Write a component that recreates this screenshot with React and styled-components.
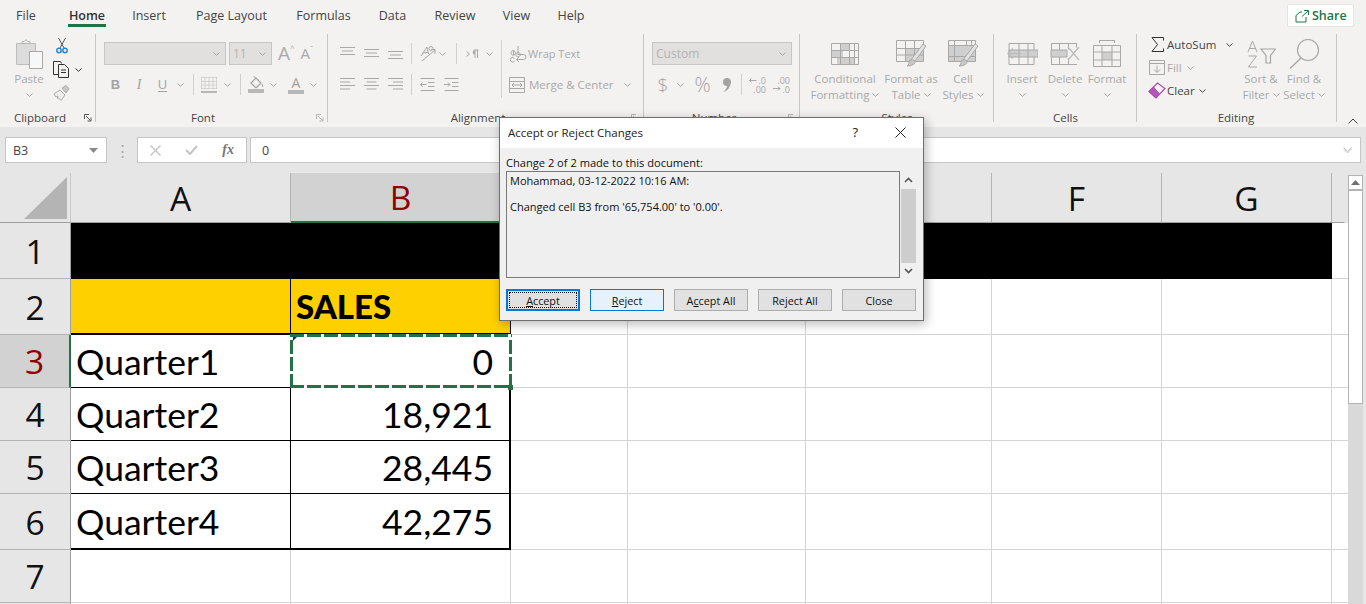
import React from 'react';
import styled, { createGlobalStyle } from 'styled-components';

const UI_FONT = `"Open Sans", "Noto Sans", sans-serif`;
const CELL_FONT = `Lato, "Liberation Sans", sans-serif`;
const MUTED = '#a9a9a9';
const GREEN = '#217346';

const Chev = ({ c = '#a3a3a3' }) => (
  <svg width="7" height="4" viewBox="0 0 7 4"><path d="M.5.5 3.5 3.3 6.5.5" fill="none" stroke={c} /></svg>
);

const PasteIcon = () => (
  <svg width="28" height="31" viewBox="0 0 28 31">
    <path d="M1.5 5.5h19v21h-19z" fill="#dcdcdc" stroke="#bdbdbd" />
    <path d="M7 5.500V3.500h2.500l1.500-2 1.500 2H15v2z" fill="#f3f2f1" stroke="#b5b5b5" />
    <path d="M14.500 13.500h13v17h-13z" fill="#f7f7f7" stroke="#a8a8a8" />
  </svg>
);
const CutIcon = () => (
  <svg width="12" height="17" viewBox="0 0 12 17">
    <path d="M2.500 1 8 11M9.500 1 4 11" fill="none" stroke="#555" />
    <circle cx="3" cy="13.500" r="2.200" fill="none" stroke="#2b88d8" strokeWidth="1.500" />
    <circle cx="9" cy="13.500" r="2.200" fill="none" stroke="#2b88d8" strokeWidth="1.500" />
  </svg>
);
const CopyIcon = () => (
  <svg width="17" height="17" viewBox="0 0 17 17">
    <path d="M6.500 13.500H.5V.5h7l1 2" fill="none" stroke="#333" />
    <path d="M5.500 3.500h6l4 4v9h-10z" fill="#f3f2f1" stroke="#333" />
    <path d="M8 9h5M8 11.500h5" stroke="#333" />
  </svg>
);
const BrushIcon = () => (
  <svg width="17" height="16" viewBox="0 0 17 16">
    <path d="M9 3l4-2.500 3 3L13 8z" fill="#c8c8c8" stroke="#a8a8a8" />
    <path d="M1 9l6-4 5 5-4 5.500L5.500 13l-1 .5L5 11l-2 1z" fill="#eee" stroke="#a8a8a8" />
  </svg>
);
const BordersIcon = () => (
  <svg width="16" height="16" viewBox="0 0 16 16">
    <path d="M.5.500h15M.5 4.500h15M.5 8h15M.5 11.500h15M.5.500v12M4 .500v12M8 .500v12M12 .500v12M15.500.500v12" stroke="#bbb" strokeDasharray="1 1" fill="none" />
    <path d="M0 15h16" stroke="#a3a3a3" strokeWidth="1.500" />
  </svg>
);
const FillIcon = () => (
  <svg width="17" height="17" viewBox="0 0 17 17">
    <path d="M3 7l5-5 5 5-4.500 4.500a1 1 0 0 1-1 0z" fill="none" stroke="#a3a3a3" strokeWidth="1.200" />
    <path d="M8 2 5.500 .5M14 8l1 3" stroke="#a3a3a3" fill="none" />
    <path d="M0 13h16v4H0z" fill="#b8b8b8" />
  </svg>
);
const AlignLines = ({ rows, align = 'left' }) => (
  <svg width="15" height="15" viewBox="0 0 15 15">
    {rows.map((w, i) => {
      const x = align === 'center' ? (15 - w) / 2 : align === 'right' ? 15 - w : 0;
      return <path key={i} d={`M${x} ${i * 3.500 + 1.500}h${w}`} stroke="#a8a8a8" />;
    })}
  </svg>
);
const VAlignIcon = ({ y }) => (
  <svg width="15" height="15" viewBox="0 0 15 15">
    {[15, 11, 15].map((w, i) => (
      <path key={i} d={`M${(15 - w) / 2} ${y + i * 3.500 + .500}h${w}`} stroke="#a8a8a8" />
    ))}
  </svg>
);
const OrientIcon = () => (
  <svg width="17" height="17" viewBox="0 0 17 17">
    <path d="M2 11 8 2l1.500 7M4 8l5-.5" stroke="#a8a8a8" fill="none" />
    <circle cx="12" cy="3.500" r="2" fill="none" stroke="#a8a8a8" />
    <path d="M3 16 16 5M12 4.500h4V9" stroke="#a8a8a8" fill="none" />
  </svg>
);
const RtlIcon = () => (
  <svg width="13" height="10" viewBox="0 0 13 10">
    <path d="M.5 2.500 3.500 5 .5 7.500" stroke="#a8a8a8" fill="none" />
    <path d="M8 1h4.500M9 1v8M11.500 1v8" stroke="#a8a8a8" fill="none" />
    <path d="M9 1a2 2 0 0 0 0 4.500z" fill="#a8a8a8" />
  </svg>
);
const IndentIcon = ({ flip }) => (
  <svg width="15" height="15" viewBox="0 0 15 15">
    <g stroke="#a8a8a8" fill="none">
      <path d="M.5 1.500h14M.5 13.500h14M8 5.500h6.500M8 9.500h6.500" />
      <path d={flip ? 'M0 7.500h6M4 5.500l2 2-2 2' : 'M.5 7.500h6M2.500 5.500l-2 2 2 2'} />
    </g>
  </svg>
);
const WrapIcon = () => (
  <svg width="17" height="18" viewBox="0 0 17 18">
    <path d="M1 8a2.200 2.200 0 1 0 0-.1M3.500 5v5M8 1v9M8 7.500a2.200 2.200 0 1 0 .1 0" stroke="#a8a8a8" fill="none" />
    <path d="M4.500 13.500a2.300 2.300 0 1 0 0 2.500" stroke="#a8a8a8" fill="none" />
    <path d="M7 14.500h6.500a2.500 2.500 0 0 0 0-5H8M9 12 6.500 14.500 9 17" stroke="#a8a8a8" fill="none" />
  </svg>
);
const MergeIcon = () => (
  <svg width="16" height="16" viewBox="0 0 16 16">
    <path d="M.5.500h15v15H.5zM.5 4.500h15M.5 11.500h15" stroke="#a8a8a8" fill="none" />
    <path d="M3 8h10M5 6 3 8l2 2M11 6l2 2-2 2" stroke="#a8a8a8" fill="none" />
  </svg>
);
const DecIcon = ({ a, b, flip }) => (
  <DecBox>
    <DecArrow width="8" height="17" viewBox="0 0 8 17">
      <path d={flip ? 'M0 12.500h7M5 10.500l2 2-2 2' : 'M.5 4.500h7M2.500 2.500l-2 2 2 2'} stroke="#a8a8a8" fill="none" />
    </DecArrow>
    <DecLine>{a}<br />{b}</DecLine>
  </DecBox>
);
const CommaIcon = () => (
  <svg width="9" height="14" viewBox="0 0 9 14">
    <circle cx="5" cy="4" r="4" fill="#a3a3a3" />
    <path d="M8.500 4.500C8.500 9 6 12.500 1.500 14 4.500 11 5.500 8.500 5.500 6z" fill="#a3a3a3" />
  </svg>
);
const CondIcon = () => (
  <svg width="28" height="22" viewBox="0 0 28 22">
    <path d="M.5.500h27v21H.5z" fill="#f3f2f1" stroke="#a8a8a8" />
    <path d="M9 1h9v7H9zM1 7h11v7H1zM6 14h17v7H6z" fill="#cfcfcf" />
    <path d="M.5 7.500h27M.5 14.500h27M9.500.500v21M18.500.500v21M23.500.500v21" stroke="#a8a8a8" fill="none" />
  </svg>
);
const TableBrushIcon = ({ cell }) => (
  <svg width="31" height="27" viewBox="0 0 31 27">
    <path d="M.5.500h27v21H.5z" fill="#f3f2f1" stroke="#a8a8a8" />
    {cell ? <path d="M1 6h26v15H1z" fill="#cfcfcf" /> : <path d="M10 9h17v12H10z" fill="#cfcfcf" />}
    <path d={cell ? 'M.5 5.500h27M.5 16.500h27M6.500.500v21M18.500.500v5M23.500.500v5' : 'M.5 8.500h27M.5 15h27M9.500.500v21M18.500.500v21'} stroke="#a8a8a8" fill="none" />
    <path d="M15 20l12-16 3 2-11 15z" fill="#e2e2e2" stroke="#a8a8a8" />
    <path d="M13 21c3-2 6-1 6 1s-3 4-8 4c2-1 2-3 2-5z" fill="#c8c8c8" stroke="#a8a8a8" />
  </svg>
);
const InsertIcon = () => (
  <svg width="32" height="22" viewBox="0 0 32 22">
    <path d="M3 .500h25v21H3z" fill="#f3f2f1" stroke="#a8a8a8" />
    <path d="M3 7h29v7H3z" fill="#cfcfcf" stroke="#a8a8a8" />
    <path d="M13 .500v21M22 .500v21" stroke="#a8a8a8" />
    <path d="M15 10.500H2M7 5.500l-5 5 5 5" stroke="#bbb" strokeWidth="1.500" fill="none" />
  </svg>
);
const DeleteIcon = () => (
  <svg width="30" height="22" viewBox="0 0 30 22">
    <path d="M1 .500h26M1 21.500h26M1.500.500v21M9.500.500v21M18.500.500v6M18.500 15v6M26.500.500v4" stroke="#a8a8a8" fill="none" />
    <path d="M1 7h16v7H1z" fill="#cfcfcf" stroke="#a8a8a8" />
    <path d="M18 4l11 13M29 4 18 17" stroke="#bbb" strokeWidth="1.300" fill="none" />
  </svg>
);
const FormatIcon = () => (
  <svg width="28" height="27" viewBox="0 0 28 27">
    <path d="M6 .500h16M6.500 0v3M21.500 0v3" stroke="#a8a8a8" fill="none" />
    <path d="M.5 5.500h27v21H.5z" fill="#f3f2f1" stroke="#a8a8a8" />
    <path d="M9 12h10v8H9z" fill="#cfcfcf" />
    <path d="M.5 12h27M.5 20h27M9 5.500v21M19 5.500v21" stroke="#a8a8a8" fill="none" />
  </svg>
);
const SigmaIcon = () => (
  <svg width="13" height="15" viewBox="0 0 13 15">
    <path d="M12.500 3.500V.5H1l5.500 7L1 14.500h11.500v-3" fill="none" stroke="#333" />
  </svg>
);
const FillDownIcon = () => (
  <svg width="16" height="15" viewBox="0 0 16 15">
    <path d="M.5.500h15v14H.5zM.5 3.500h15" stroke="#a8a8a8" fill="none" />
    <path d="M8 5.500V12M5 9.500 8 12.500 11 9.500" stroke="#a8a8a8" fill="none" />
  </svg>
);
const EraserIcon = () => (
  <svg width="18" height="17" viewBox="0 0 18 17">
    <path d="M1 9.500 9.500 1 17 6.500 8 16z" fill="#f3f2f1" stroke="#a94bb0" strokeWidth="1.200" />
    <path d="M1 9.500 5.500 5 11 11.500 8 16z" fill="#b455b9" stroke="#a94bb0" />
  </svg>
);
const SortIcon = () => (
  <svg width="29" height="28" viewBox="0 0 29 28">
    <path d="M1 12 5.500 1 10 12M2.500 8.500h6M1.500 16h8L1.500 27h8.500" stroke="#a8a8a8" fill="none" />
    <path d="M14 9h14.500l-5 6.500V23h-4.500v-7.500z" fill="#f3f2f1" stroke="#a3a3a3" strokeWidth="1.200" />
  </svg>
);
const FindIcon = () => (
  <svg width="31" height="30" viewBox="0 0 31 30">
    <circle cx="19" cy="11" r="10.500" fill="none" stroke="#a8a8a8" strokeWidth="1.200" />
    <path d="M12 19 1 29.500" stroke="#a8a8a8" strokeWidth="1.500" />
  </svg>
);
const ShareIcon = () => (
  <svg width="14" height="14" viewBox="0 0 14 14">
    <path d="M9 1.500h4.500V6M13 2 7 7.500" fill="none" stroke={GREEN} />
    <path d="M1 6.500 5 3h2M11 8v5H1V6.500" fill="none" stroke={GREEN} />
  </svg>
);
const LauncherIcon = ({ c }) => (
  <svg width="8" height="8" viewBox="0 0 8 8">
    <path d="M.5 5V.5H5M2 2l4.500 4.500M3.500 7h3.500V3.500" fill="none" stroke={c} />
  </svg>
);

const TABS = [
  ['File', 52], ['Home', 70, true], ['Insert', 54], ['Page Layout', 111], ['Formulas', 73],
  ['Data', 65], ['Review', 60], ['View', 63], ['Help', 46],
];
const COLUMNS = [['A', 220], ['B', 220, true], ['', 117], ['', 178], ['', 186], ['F', 170], ['G', 170]];
const ROW_HEIGHTS = [56, 56, 53, 53, 53, 56, 53, 2];
const SALES = [['Quarter1', '0'], ['Quarter2', '18,921'], ['Quarter3', '28,445'], ['Quarter4', '42,275']];

const App = () => (
  <Page>
    <GlobalStyle />
    <TabBar>
      {TABS.map(([name, w, active]) => <Tab key={name} $w={w} $active={active}>{name}</Tab>)}
      <ShareButton><ShareIcon />Share</ShareButton>
    </TabBar>

    <Ribbon>
      <Group $w={96}>
        <Body $pl={7}>
          <BigCol $w={44}>
            <BigIcon><PasteIcon /></BigIcon>
            <BigText>Paste</BigText>
            <ChevLine><Chev /></ChevLine>
          </BigCol>
          <ClipTools>
            <CutIcon />
            <CopyRow><CopyIcon /><Chev c="#333" /></CopyRow>
            <BrushIcon />
          </ClipTools>
        </Body>
        <GroupLabel $pr={16}>Clipboard</GroupLabel>
        <Launcher $left={84}><LauncherIcon c="#555" /></Launcher>
      </Group>

      <Group $w={232}>
        <Stack>
          <Row>
            <Combo $ml={8} $w={122}><Chev /></Combo>
            <Combo $ml={3} $w={43}><ComboText>11</ComboText><Chev /></Combo>
            <Tool $ml={6}><GrowA>A</GrowA><Caret>^</Caret></Tool>
            <Tool $ml={6}><ShrinkA>A</ShrinkA><Caret>ˇ</Caret></Tool>
          </Row>
          <Row>
            <Tool $ml={15} $w={9}><BoldB>B</BoldB></Tool>
            <Tool $ml={15} $w={8}><ItalicI>I</ItalicI></Tool>
            <Tool $ml={15} $w={9}><UnderU>U</UnderU></Tool>
            <Tool $ml={10}><Chev /></Tool>
            <Sep $ml={9} />
            <Tool $ml={7}><BordersIcon /></Tool>
            <Tool $ml={7}><Chev /></Tool>
            <Sep $ml={9} />
            <Tool $ml={7}><FillIcon /></Tool>
            <Tool $ml={5}><Chev /></Tool>
            <Tool $ml={11} $w={16}><ColorA>A</ColorA></Tool>
            <Tool $ml={6}><Chev /></Tool>
          </Row>
        </Stack>
        <GroupLabel $pr={18}>Font</GroupLabel>
        <Launcher $left={220}><LauncherIcon c="#b5b5b5" /></Launcher>
      </Group>

      <Group $w={316}>
        <Body>
          <Stack $w={173}>
            <Row>
              <Tool $ml={12}><VAlignIcon y={1} /></Tool>
              <Tool $ml={9}><VAlignIcon y={3} /></Tool>
              <Tool $ml={9}><VAlignIcon y={5} /></Tool>
              <Sep $ml={8} />
              <Tool $ml={7}><OrientIcon /></Tool>
              <Tool $ml={3}><Chev /></Tool>
              <Sep $ml={10} />
              <Tool $ml={9}><RtlIcon /></Tool>
              <Tool $ml={7}><Chev /></Tool>
            </Row>
            <Row>
              <Tool $ml={12}><AlignLines rows={[15, 10, 15, 10]} /></Tool>
              <Tool $ml={9}><AlignLines rows={[15, 10, 15, 10]} align="center" /></Tool>
              <Tool $ml={9}><AlignLines rows={[15, 10, 15, 10]} align="right" /></Tool>
              <Sep $ml={8} />
              <Tool $ml={8}><IndentIcon /></Tool>
              <Tool $ml={9}><IndentIcon flip /></Tool>
            </Row>
          </Stack>
          <WrapBlock>
            <Row>
              <Tool $ml={8}><WrapIcon /></Tool>
              <ToolText $ml={1} $fs={11}>Wrap Text</ToolText>
            </Row>
            <Row>
              <Tool $ml={7}><MergeIcon /></Tool>
              <ToolText $ml={4}>Merge &amp; Center</ToolText>
              <Tool $ml={10}><Chev /></Tool>
            </Row>
          </WrapBlock>
        </Body>
        <GroupLabel $pr={16}>Alignment</GroupLabel>
        <Launcher $left={303}><LauncherIcon c="#b5b5b5" /></Launcher>
      </Group>

      <Group $w={156}>
        <Stack>
          <Row>
            <Combo $ml={8} $w={140}><ComboText>Custom</ComboText><Chev /></Combo>
          </Row>
          <Row>
            <Tool $ml={14} $w={10}><Dollar>$</Dollar></Tool>
            <Tool $ml={9}><Chev /></Tool>
            <Tool $ml={9} $w={19}><Percent>%</Percent></Tool>
            <Tool $ml={10} $w={9}><CommaIcon /></Tool>
            <Sep $ml={10} />
            <Tool $ml={7}><DecIcon a=".0" b=".00" /></Tool>
            <Tool $ml={7}><DecIcon a=".00" b=".0" flip /></Tool>
          </Row>
        </Stack>
        <GroupLabel $pr={16}>Number</GroupLabel>
        <Launcher $left={144}><LauncherIcon c="#b5b5b5" /></Launcher>
      </Group>

      <Group $w={194}>
        <Body $pl={6}>
          <BigCol $w={78}><BigIcon><CondIcon /></BigIcon><BigText>Conditional</BigText><BigText>Formatting <Chev /></BigText></BigCol>
          <BigCol $w={54}><BigIcon><TableBrushIcon /></BigIcon><BigText>Format as</BigText><BigText>Table <Chev /></BigText></BigCol>
          <BigCol $w={50}><BigIcon><TableBrushIcon cell /></BigIcon><BigText>Cell</BigText><BigText>Styles <Chev /></BigText></BigCol>
        </Body>
        <GroupLabel>Styles</GroupLabel>
      </Group>

      <Group $w={143}>
        <Body $pl={7}>
          <BigCol $w={42}><BigIcon><InsertIcon /></BigIcon><BigText>Insert</BigText><ChevLine><Chev /></ChevLine></BigCol>
          <BigCol $w={44}><BigIcon><DeleteIcon /></BigIcon><BigText>Delete</BigText><ChevLine><Chev /></ChevLine></BigCol>
          <BigCol $w={40}><BigIcon><FormatIcon /></BigIcon><BigText>Format</BigText><ChevLine><Chev /></ChevLine></BigCol>
        </Body>
        <GroupLabel>Cells</GroupLabel>
      </Group>

      <Group $w={200}>
        <Body>
          <EditList>
            <EditRow><Tool $ml={11} $w={18}><SigmaIcon /></Tool><ToolText $dark $ml={1}>AutoSum</ToolText><Tool $ml={10}><Chev c="#444" /></Tool></EditRow>
            <EditRow><Tool $ml={10} $w={19}><FillDownIcon /></Tool><ToolText $ml={1}>Fill</ToolText><Tool $ml={5}><Chev /></Tool></EditRow>
            <EditRow><Tool $ml={10} $w={19}><EraserIcon /></Tool><ToolText $dark $ml={1}>Clear</ToolText><Tool $ml={4}><Chev c="#444" /></Tool></EditRow>
          </EditList>
          <BigCol $w={42}><BigIcon><SortIcon /></BigIcon><BigText>Sort &amp;</BigText><BigText>Filter <Chev /></BigText></BigCol>
          <BigCol $w={44}><BigIcon><FindIcon /></BigIcon><BigText>Find &amp;</BigText><BigText>Select <Chev /></BigText></BigCol>
        </Body>
        <GroupLabel $pr={2}>Editing</GroupLabel>
      </Group>

      <CollapseArea>
        <svg width="10" height="6" viewBox="0 0 10 6"><path d="M.5 5.500 5 1l4.500 4.500" fill="none" stroke="#444" /></svg>
      </CollapseArea>
    </Ribbon>

    <FormulaBar>
      <NameBox>B3<svg width="9" height="5" viewBox="0 0 9 5"><path d="M0 0h9L4.500 5z" fill="#8a8a8a" /></svg></NameBox>
      <BarDots>⋮</BarDots>
      <FxBox>
        <svg width="11" height="11" viewBox="0 0 11 11"><path d="M.5.500l10 10M10.500.500l-10 10" stroke="#c4c4c4" strokeWidth="1.400" /></svg>
        <svg width="13" height="10" viewBox="0 0 13 10"><path d="M1 5l4 4 7-8" fill="none" stroke="#c4c4c4" strokeWidth="2" /></svg>
        <FxText>fx</FxText>
      </FxBox>
      <FormulaInput>
        0
        <svg width="9" height="6" viewBox="0 0 9 6"><path d="M.5.500 4.500 4.500 8.500.500M.5 2 4.500 6 8.500 2" fill="none" stroke="#c4c4c4" /></svg>
      </FormulaInput>
    </FormulaBar>

    <SheetArea>
      <Grid>
        <Corner>
          <svg width="43" height="42" viewBox="0 0 43 42"><path d="M43 0v42H0z" fill="#b4b4b4" /></svg>
        </Corner>
        {COLUMNS.map(([label, , selected], i) => (
          <ColHead key={i} $selected={selected}>{label}</ColHead>
        ))}
        <ColHead $last />

        {ROW_HEIGHTS.map((_, r) => {
          const rowNo = r + 1;
          const sales = SALES[r - 2];
          return (
            <React.Fragment key={r}>
              <RowHead $selected={rowNo === 3} $green={rowNo === 3}>{rowNo < 8 ? rowNo : ''}</RowHead>
              {rowNo === 1 && <MergedBlack />}
              {rowNo === 2 && (
                <>
                  <YellowCell />
                  <YellowCell $bold>SALES</YellowCell>
                </>
              )}
              {sales && (
                <>
                  <Cell $data $last={rowNo === 6}>{sales[0]}</Cell>
                  {rowNo === 3 ? (
                    <ActiveCell>{sales[1]}</ActiveCell>
                  ) : (
                    <Cell $data $right $last={rowNo === 6} $edge>{sales[1]}</Cell>
                  )}
                </>
              )}
              {rowNo > 6 && (
                <>
                  <Cell />
                  <Cell />
                </>
              )}
              {rowNo !== 1 && [0, 1, 2, 3, 4].map(c => <Cell key={c} />)}
              <Cell $end />
            </React.Fragment>
          );
        })}
      </Grid>
      <ScrollBar>
        <ScrollUp><svg width="9" height="5" viewBox="0 0 9 5"><path d="M4.500 0 9 5H0z" fill="#707070" /></svg></ScrollUp>
        <ScrollThumb />
      </ScrollBar>
    </SheetArea>

    <Dialog>
      <DialogTitle>
        <span>Accept or Reject Changes</span>
        <DialogHelp>?</DialogHelp>
        <svg width="11" height="11" viewBox="0 0 11 11"><path d="M.5.500l10 10M10.500.500l-10 10" stroke="#222" /></svg>
      </DialogTitle>
      <DialogBody>
        <DialogLine>Change 2 of 2 made to this document:</DialogLine>
        <ChangeBox>
          <ChangeText>
            <div>Mohammad, 03-12-2022 10:16 AM:</div>
            <div>&nbsp;</div>
            <div>Changed cell B3 from '65,754.00' to '0.00'.</div>
          </ChangeText>
          <BoxScroll>
            <svg width="9" height="6" viewBox="0 0 9 6"><path d="M1 5l3.500-3.500L8 5" fill="none" stroke="#555" strokeWidth="1.600" /></svg>
            <BoxThumb />
            <svg width="9" height="6" viewBox="0 0 9 6"><path d="M1 1l3.500 3.500L8 1" fill="none" stroke="#555" strokeWidth="1.600" /></svg>
          </BoxScroll>
        </ChangeBox>
        <DialogButtons>
          <DlgButton $focus><FocusRing><u>A</u>ccept</FocusRing></DlgButton>
          <DlgButton $hover><u>R</u>eject</DlgButton>
          <DlgButton>A<u>c</u>cept All</DlgButton>
          <DlgButton>Re<u>j</u>ect All</DlgButton>
          <DlgButton>Close</DlgButton>
        </DialogButtons>
      </DialogBody>
    </Dialog>
  </Page>
);

export default App;

const GlobalStyle = createGlobalStyle`
  html, body { margin: 0; padding: 0; background: #fff; overflow: hidden; }
  * { box-sizing: border-box; }
`;

const Page = styled.div`
  position: relative;
  width: 1366px;
  height: 604px;
  overflow: hidden;
  background: #f3f2f1;
  font-family: ${UI_FONT};
  font-size: 12px;
  color: #444;
`;

const TabBar = styled.div`
  display: flex;
  height: 33px;
`;

const Tab = styled.div`
  position: relative;
  width: ${p => p.$w}px;
  height: 30px;
  line-height: 31px;
  text-align: center;
  font-size: 12.5px;
  color: ${p => (p.$active ? '#333' : '#444')};
  ${p => p.$active && `
    font-weight: 600;
    &::after {
      content: '';
      position: absolute;
      left: 16px;
      right: 16px;
      bottom: 3px;
      height: 3px;
      background: ${GREEN};
    }
  `}
`;

const ShareButton = styled.div`
  display: flex;
  align-items: center;
  gap: 3px;
  width: 67px;
  height: 23px;
  margin: 4px 0 0 693px;
  padding-left: 7px;
  background: #fff;
  border: 1px solid #e6e4e2;
  border-radius: 2px;
  color: ${GREEN};
  font-size: 12.5px;
  font-weight: 600;
`;

const Ribbon = styled.div`
  display: flex;
  height: 94px;
`;

const Group = styled.div`
  position: relative;
  display: flex;
  flex-direction: column;
  width: ${p => p.$w}px;
  flex: none;
  &::after {
    content: '';
    position: absolute;
    right: 0;
    top: 1px;
    bottom: 5px;
    width: 1px;
    background: #c8c6c4;
  }
`;

const Body = styled.div`
  display: flex;
  flex: 1;
  padding-left: ${p => p.$pl || 0}px;
  min-height: 0;
`;

const Stack = styled.div`
  display: flex;
  flex-direction: column;
  flex: ${p => (p.$w ? 'none' : 1)};
  width: ${p => (p.$w ? `${p.$w}px` : 'auto')};
  gap: 8px;
  padding-top: 9px;
`;

const GroupLabel = styled.div`
  height: 18px;
  padding-right: ${p => p.$pr || 0}px;
  line-height: 17px;
  text-align: center;
  font-size: 11.500px;
  color: #444;
`;

const Launcher = styled.span`
  position: absolute;
  left: ${p => p.$left}px;
  top: 81px;
  line-height: 0;
`;

const BigCol = styled.div`
  display: flex;
  flex-direction: column;
  align-items: center;
  flex: none;
  width: ${p => p.$w}px;
  padding-top: 3px;
`;

const BigIcon = styled.div`
  display: flex;
  align-items: center;
  justify-content: center;
  height: 35px;
`;

const BigText = styled.div`
  height: 16px;
  line-height: 16px;
  white-space: nowrap;
  font-size: 11.500px;
  color: ${MUTED};
  svg { vertical-align: 2px; }
`;

const ChevLine = styled.div`
  display: flex;
  align-items: center;
  height: 16px;
`;

const ClipTools = styled.div`
  display: flex;
  flex-direction: column;
  justify-content: flex-start;
  align-items: flex-start;
  gap: 7px;
  padding: 4px 0 0 4px;
  & > svg:first-child { margin-left: 1px; }
  & > svg:last-child { margin-left: -2px; }
`;

const CopyRow = styled.div`
  display: flex;
  align-items: center;
  gap: 5px;
  svg:first-child { margin-left: -2px; }
`;

const Row = styled.div`
  display: flex;
  align-items: center;
  height: 23px;
`;

const Tool = styled.div`
  display: flex;
  align-items: center;
  justify-content: center;
  flex: none;
  margin-left: ${p => p.$ml || 0}px;
  ${p => p.$w && `width: ${p.$w}px;`}
`;

const ToolText = styled.span`
  margin-left: ${p => p.$ml || 0}px;
  font-size: ${p => p.$fs || 11.5}px;
  white-space: nowrap;
  color: ${p => (p.$dark ? '#444' : MUTED)};
`;

const Sep = styled.div`
  flex: none;
  width: 1px;
  height: 21px;
  margin-left: ${p => p.$ml || 0}px;
  background: #d2d0ce;
`;

const Combo = styled.div`
  display: flex;
  align-items: center;
  justify-content: space-between;
  flex: none;
  width: ${p => p.$w}px;
  height: 23px;
  margin-left: ${p => p.$ml || 0}px;
  padding: 0 5px 0 3px;
  background: #e1e0df;
  border: 1px solid #c8c6c4;
  svg { margin-left: auto; }
`;

const ComboText = styled.span`
  font-size: 12px;
  color: #b3b3b3;
`;

const GrowA = styled.span`
  font-size: 19px;
  line-height: 23px;
  color: #a9a9a9;
`;

const ShrinkA = styled.span`
  font-size: 15px;
  line-height: 23px;
  color: #a9a9a9;
`;

const Caret = styled.span`
  font-size: 8px;
  line-height: 12px;
  align-self: flex-start;
  color: #a9a9a9;
`;

const BoldB = styled.span`
  font-family: "Liberation Sans", sans-serif;
  font-size: 13px;
  font-weight: 700;
  color: #a3a3a3;
`;

const ItalicI = styled.span`
  font-family: "Liberation Serif", serif;
  font-size: 14px;
  font-style: italic;
  color: #a3a3a3;
`;

const UnderU = styled.span`
  font-size: 13px;
  line-height: 14px;
  color: #a3a3a3;
  border-bottom: 1px solid #a3a3a3;
`;

const ColorA = styled.span`
  width: 16px;
  font-size: 14px;
  line-height: 15px;
  text-align: center;
  color: #a3a3a3;
  border-bottom: 4px solid #b8b8b8;
`;

const Dollar = styled.span`
  font-size: 19px;
  font-weight: 300;
  line-height: 20px;
  color: #a3a3a3;
`;

const Percent = styled.span`
  font-size: 20px;
  font-weight: 300;
  line-height: 20px;
  color: #a3a3a3;
`;

const DecBox = styled.div`
  position: relative;
  width: 17px;
  height: 18px;
  text-align: right;
`;

const DecArrow = styled.svg`
  position: absolute;
  left: 0;
  top: 0;
`;

const DecLine = styled.span`
  display: block;
  font-size: 9px;
  line-height: 9px;
  color: #a8a8a8;
`;

const WrapBlock = styled.div`
  display: flex;
  flex-direction: column;
  flex: none;
  gap: 8px;
  height: 58px;
  margin-top: 7px;
  padding-top: 2px;
  border-left: 1px solid #d2d0ce;
  width: 142px;
`;

const EditList = styled.div`
  flex: none;
  width: 103px;
`;

const EditRow = styled.div`
  display: flex;
  align-items: center;
  height: 23px;
`;

const CollapseArea = styled.div`
  display: flex;
  flex: 1;
  align-items: flex-end;
  padding: 0 0 3px 11px;
`;

const FormulaBar = styled.div`
  display: flex;
  align-items: center;
  height: 46px;
  padding: 0 5px;
  background: #e6e6e6;
`;

const boxBorder = `
  height: 26px;
  background: #fff;
  border: 1px solid #c6c6c6;
`;

const NameBox = styled.div`
  ${boxBorder}
  display: flex;
  align-items: center;
  justify-content: space-between;
  width: 102px;
  padding: 0 8px 0 7px;
  font-size: 12.500px;
  color: #444;
`;

const BarDots = styled.div`
  width: 30px;
  text-align: center;
  font-size: 15px;
  color: #a6a6a6;
`;

const FxBox = styled.div`
  ${boxBorder}
  display: flex;
  align-items: center;
  justify-content: space-between;
  width: 110px;
  padding: 0 12px;
`;

const FxText = styled.span`
  font-family: "Liberation Serif", serif;
  font-size: 14px;
  font-style: italic;
  font-weight: 700;
  color: #777;
`;

const FormulaInput = styled.div`
  ${boxBorder}
  display: flex;
  align-items: center;
  justify-content: space-between;
  width: 1111px;
  margin-left: 3px;
  padding: 0 8px 0 11px;
  font-size: 12.500px;
  color: #444;
`;

const SheetArea = styled.div`
  display: flex;
  background: #e6e6e6;
  height: 431px;
`;

const Grid = styled.div`
  display: grid;
  flex: none;
  width: 1345px;
  grid-template-columns: 71px ${COLUMNS.map(c => `${c[1]}px`).join(' ')} 13px;
  grid-template-rows: 50px ${ROW_HEIGHTS.map(h => `${h}px`).join(' ')};
  background: #fff;
`;

const headFont = `
  font-family: ${UI_FONT};
  font-size: 33.500px;
  display: flex;
  align-items: center;
  justify-content: center;
`;

const Corner = styled.div`
  display: flex;
  align-items: center;
  justify-content: flex-end;
  padding: 0 3px 0 0;
  background: #e6e6e6;
  border-right: 1px solid #c8c8c8;
  border-bottom: 1px solid #9f9f9f;
`;

const ColHead = styled.div`
  ${headFont}
  background: ${p => (p.$selected ? '#d2d2d2' : '#e6e6e6')};
  color: ${p => (p.$selected ? '#8f0000' : '#111')};
  border-right: 1px solid ${p => (p.$last ? 'transparent' : '#b4b4b4')};
  border-bottom: ${p => (p.$selected ? `2px solid ${GREEN}` : '1px solid #9f9f9f')};
`;

const RowHead = styled.div`
  ${headFont}
  background: ${p => (p.$selected ? '#d2d2d2' : '#e6e6e6')};
  color: ${p => (p.$selected ? '#8f0000' : '#111')};
  border-right: ${p => (p.$green ? `2px solid ${GREEN}` : '1px solid #9f9f9f')};
  border-bottom: 1px solid #b4b4b4;
`;

const MergedBlack = styled.div`
  grid-column: 2 / 9;
  background: #000;
`;

const YellowCell = styled.div`
  display: flex;
  align-items: center;
  padding-left: 5px;
  background: #ffd000;
  border-right: 1px solid #000;
  border-bottom: 2px solid #000;
  font-family: ${CELL_FONT};
  font-size: 33px;
  font-weight: 900;
  color: #000;
`;

const Cell = styled.div`
  display: flex;
  align-items: center;
  justify-content: ${p => (p.$right ? 'flex-end' : 'flex-start')};
  padding: 0 ${p => (p.$edge ? 16 : 18)}px 0 5px;
  background: #fff;
  border-right: ${p => (p.$edge ? '2px solid #000' : p.$data ? '1px solid #000' : p.$end ? '1px solid #a0a0a0' : '1px solid #d4d4d4')};
  border-bottom: ${p => (p.$data ? (p.$last ? '2px solid #000' : '1px solid #000') : '1px solid #d4d4d4')};
  font-family: ${CELL_FONT};
  font-size: 35.500px;
  color: #000;
`;

const ActiveCell = styled(Cell)`
  position: relative;
  justify-content: flex-end;
  margin: -1px -1px 0 -1px;
  padding-right: 19px;
  border: none;
  background:
    repeating-linear-gradient(90deg, ${GREEN} 0 14px, #fff 14px 17px) top / 100% 3px no-repeat,
    repeating-linear-gradient(90deg, ${GREEN} 0 14px, #fff 14px 17px) bottom / 100% 3px no-repeat,
    repeating-linear-gradient(0deg, ${GREEN} 0 14px, #fff 14px 17px) left / 3px 100% no-repeat,
    repeating-linear-gradient(0deg, ${GREEN} 0 14px, #fff 14px 17px) right / 3px 100% no-repeat,
    #fff;
  &::before {
    content: '';
    position: absolute;
    left: 3px;
    top: 3px;
    border-top: 4px solid #1c1c8c;
    border-right: 4px solid transparent;
  }
  &::after {
    content: '';
    position: absolute;
    right: -1px;
    bottom: -2px;
    width: 5px;
    height: 5px;
    background: ${GREEN};
  }
`;

const ScrollBar = styled.div`
  display: flex;
  flex-direction: column;
  width: 15px;
  margin: 2px 0 0 3px;
  background: #d9d9d9;
`;

const ScrollUp = styled.div`
  display: flex;
  align-items: center;
  justify-content: center;
  height: 15px;
  background: #fff;
  border: 1px solid #b4b4b4;
`;

const ScrollThumb = styled.div`
  height: 214px;
  background: #fff;
  border: 1px solid #b4b4b4;
`;

const Dialog = styled.div`
  position: absolute;
  left: 499px;
  top: 117px;
  width: 425px;
  height: 204px;
  display: flex;
  flex-direction: column;
  background: #f0f0f0;
  border: 1px solid #6e6e6e;
  box-shadow: 2px 3px 10px rgba(0, 0, 0, 0.28);
  color: #111;
`;

const DialogTitle = styled.div`
  display: flex;
  align-items: center;
  height: 30px;
  padding: 0 17px 2px 8px;
  background: #fff;
  font-size: 11.500px;
  color: #222;
`;

const DialogHelp = styled.span`
  margin: 0 37px 0 auto;
  font-size: 13px;
`;

const DialogBody = styled.div`
  flex: 1;
  padding: 6px 6px 0;
`;

const DialogLine = styled.div`
  height: 17px;
  line-height: 17px;
  font-size: 11.100px;
`;

const ChangeBox = styled.div`
  display: flex;
  height: 107px;
`;

const ChangeText = styled.div`
  flex: none;
  width: 394px;
  padding: 2px 3px;
  background: #efefef;
  border: 1px solid #7a7a7a;
  font-size: 11px;
  line-height: 13px;
  div { height: 13px; white-space: nowrap; }
`;

const BoxScroll = styled.div`
  display: flex;
  flex-direction: column;
  align-items: center;
  justify-content: space-between;
  width: 17px;
  padding: 6px 0 4px;
`;

const BoxThumb = styled.div`
  width: 15px;
  height: 74px;
  background: #cdcdcd;
`;

const DialogButtons = styled.div`
  display: flex;
  gap: 10px;
  margin-top: 11px;
`;

const DlgButton = styled.div`
  display: flex;
  align-items: center;
  justify-content: center;
  width: 74px;
  height: 22px;
  padding: 1px;
  font-size: 10.800px;
  background: ${p => (p.$hover ? '#e5f1fb' : '#e1e1e1')};
  border: ${p => (p.$focus ? '2px solid #0078d7' : p.$hover ? '1px solid #0078d7' : '1px solid #adadad')};
`;

const FocusRing = styled.span`
  display: flex;
  align-items: center;
  justify-content: center;
  width: 100%;
  height: 100%;
  border: 1px dotted #111;
  u { text-decoration: underline; }
`;
